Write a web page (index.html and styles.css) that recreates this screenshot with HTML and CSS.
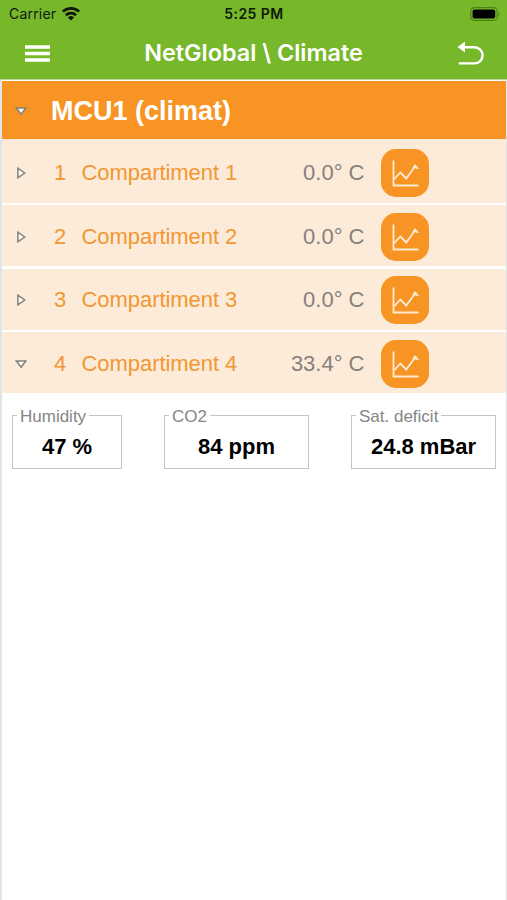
FILE: index.html
```html
<!DOCTYPE html>
<html lang="en">
<head>
<meta charset="utf-8">
<title>NetGlobal \ Climate</title>
<link rel="stylesheet" href="styles.css">
</head>
<body>
<svg class="defs" width="0" height="0" aria-hidden="true">
  <symbol id="chart" viewBox="0 0 48 48">
    <path d="M12.5 11.5v25H37.5M13 30.5l6.3-7 6 6 8.7-12" fill="none" stroke="#fdebd3" stroke-width="1.8"/>
    <path d="M34 15l4.4 5.3-7-1.6z" fill="#fdebd3"/>
  </symbol>
  <symbol id="closed" viewBox="0 0 12 12">
    <path d="M2.9 1.2v9.6L9.7 6z" fill="#fffaf3" stroke="#85817d" stroke-width="1.5"/>
  </symbol>
  <symbol id="open" viewBox="0 0 12 12">
    <path d="M1.4 3h9.4L6.1 9.2z" fill="#fffaf3" stroke="#85817d" stroke-width="1.5"/>
  </symbol>
</svg>
<header>
  <div class="status">
    <div class="carrier"><span>Carrier</span>
      <svg width="18" height="14" viewBox="0 0 18 14"><g fill="none" stroke="#10170a" stroke-width="2.7"><path d="M.9 4.6a11.6 11.6 0 0 1 16.2 0"/><path d="M3.9 8.2a7.3 7.3 0 0 1 10.2 0"/></g><path d="M9 13.6L6 10.5a4.3 4.3 0 0 1 6 0z" fill="#10170a"/></svg>
    </div>
    <span class="time">5:25 PM</span>
    <svg class="battery" width="31" height="14" viewBox="0 0 31 14"><rect x=".7" y=".7" width="26.6" height="12.6" rx="3.8" fill="none" stroke="#4c8116" stroke-width="1.2"/><rect x="2.6" y="2.6" width="22.6" height="8.8" rx="2" fill="#000"/><path d="M28.6 4.8q2.2 2.2 0 4.4z" fill="#4c8116"/></svg>
  </div>
  <nav>
    <svg width="25" height="17" viewBox="0 0 25 17"><path d="M0 2h25M0 8.5h25M0 15h25" stroke="#fff" stroke-width="3.7"/></svg>
    <h1>NetGlobal \ Climate</h1>
    <svg width="27" height="25" viewBox="0 0 27 25"><path d="M6 6.2h11.5a8.1 8.1 0 0 1 0 16.2H2.8" fill="none" stroke="#fff" stroke-width="2.4" stroke-linecap="round"/><path d="M.5 6L8 .5v11z" fill="#fff"/></svg>
  </nav>
</header>
<main>
  <h2><svg class="arrow" width="12" height="12"><use href="#open"/></svg><span class="unit">MCU1 (climat)</span></h2>
  <div class="row"><svg class="arrow" width="12" height="12"><use href="#closed"/></svg><span class="num">1</span><span class="name">Compartiment 1</span><span class="temp">0.0° C</span><svg class="chart"><use href="#chart"/></svg></div>
  <div class="row"><svg class="arrow" width="12" height="12"><use href="#closed"/></svg><span class="num">2</span><span class="name">Compartiment 2</span><span class="temp">0.0° C</span><svg class="chart"><use href="#chart"/></svg></div>
  <div class="row"><svg class="arrow" width="12" height="12"><use href="#closed"/></svg><span class="num">3</span><span class="name">Compartiment 3</span><span class="temp">0.0° C</span><svg class="chart"><use href="#chart"/></svg></div>
  <div class="row"><svg class="arrow" width="12" height="12"><use href="#open"/></svg><span class="num">4</span><span class="name">Compartiment 4</span><span class="temp">33.4° C</span><svg class="chart"><use href="#chart"/></svg></div>
  <div class="readings">
    <fieldset class="small"><legend>Humidity</legend><b>47 %</b></fieldset>
    <fieldset><legend>CO2</legend><b>84 ppm</b></fieldset>
    <fieldset><legend>Sat. deficit</legend><b>24.8 mBar</b></fieldset>
  </div>
</main>
</body>
</html>
```
FILE: styles.css
```css
* { box-sizing: border-box; }
body {
  margin: 0;
  height: 900px;
  display: flex;
  flex-direction: column;
  background: #fff;
  font-family: "Liberation Sans", Arial, sans-serif;
  overflow: hidden;
}
.defs { position: absolute; }
svg { display: block; flex: none; }
header {
  height: 80px;
  background: #76b82a;
  border-bottom: 1px solid #c3cf9f;
  font-family: Inter, sans-serif;
}
.status {
  height: 27px;
  display: grid;
  grid-template-columns: 1fr auto 1fr;
  align-items: center;
  padding: 0 6px 0 9px;
  color: #10170a;
}
.carrier { display: flex; align-items: center; gap: 6px; font-size: 14px; letter-spacing: .2px; }
.time { margin-right: 2px; font-size: 14px; font-weight: 600; letter-spacing: .45px; }
.battery { justify-self: end; }
nav {
  height: 52px;
  display: flex;
  align-items: center;
  justify-content: space-between;
  padding: 0 23px 0 25px;
}
h1 { margin: 0; padding-bottom: 2px; font-size: 23.4px; font-weight: 600; color: #fff; white-space: nowrap; }
main {
  flex: 1;
  border-left: 2px solid #e2e5e7;
  border-right: 1px solid #e2e5e7;
  padding-top: 1px;
}
h2 {
  margin: 0;
  height: 58px;
  display: flex;
  align-items: center;
  padding: 1px 0 0 13px;
  background: #f79423;
  color: #fff;
  font-size: 27px;
  line-height: 30px;
}
.unit { margin-left: 24px; }
.row {
  height: 61px;
  margin-bottom: 2.5px;
  display: flex;
  align-items: center;
  padding: 2px 0 0 13px;
  background: #fcebd8;
  color: #f29733;
  font-size: 22px;
}
h2 + .row { height: 63.5px; padding-top: 4px; }
.num { width: 14px; margin-left: 27px; }
.name { width: 170px; margin-left: 13.5px; letter-spacing: -.05px; white-space: nowrap; }
.temp { width: 113px; text-align: right; color: #86817c; white-space: nowrap; }
.chart { width: 48px; height: 48px; margin-left: 16.5px; border-radius: 15px; background: #f79423; }
.readings {
  display: flex;
  justify-content: space-between;
  padding: 9px 10px 0;
}
fieldset {
  width: 145px;
  height: 64px;
  margin: 0;
  padding: 0;
  border: 1px solid #c4c4c4;
  text-align: center;
}
.small { width: 110px; }
legend { margin-left: 4px; padding: 2px 3px 0; text-align: left; font-size: 17px; line-height: 19px; color: #858585; }
b { display: block; font-size: 22px; line-height: 26px; padding-top: 8px; color: #000; }
```
